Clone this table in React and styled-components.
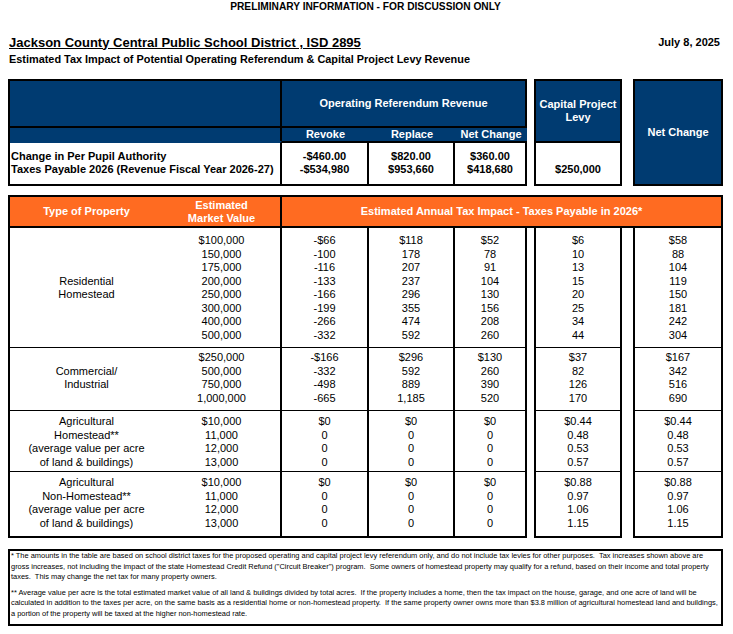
import React from 'react';
import styled, { createGlobalStyle } from 'styled-components';

const NAVY = '#003b71';
const ORANGE = '#ff6b21';

const GlobalStyle = createGlobalStyle`
  html, body {
    margin: 0;
    padding: 0;
    background: #fff;
  }
  body {
    font-family: 'Liberation Sans', Arial, sans-serif;
    color: #000;
  }
`;

const Page = styled.div`
  width: 723px;
  padding-left: 8px;
  box-sizing: border-box;
`;

const Banner = styled.div`
  height: 14px;
  line-height: 14px;
  text-align: center;
  font-size: 10.2px;
  font-weight: bold;
`;

const TitleRow = styled.div`
  display: flex;
  justify-content: space-between;
  align-items: center;
  margin-top: 20px;
  height: 16px;
  padding: 0 3px 0 1px;
`;

const Title = styled.h1`
  margin: 0;
  font-size: 13px;
  font-weight: bold;
  text-decoration: underline;
  text-underline-offset: 1px;
`;

const DateText = styled.span`
  font-size: 11px;
  font-weight: bold;
`;

const Subtitle = styled.h2`
  margin: 2px 0 0 1px;
  height: 14px;
  line-height: 14px;
  font-size: 10.9px;
  font-weight: bold;
`;

/* ---------- top summary boxes ---------- */

const TopRow = styled.div`
  display: flex;
  align-items: flex-start;
  margin-top: 13px;
  height: 107px;
`;

const OperatingBox = styled.div`
  width: 519px;
  height: 107px;
  box-sizing: border-box;
  border: 2px solid #000;
  border-right: none;
  margin-right: 7px;
`;

const HeadRow = styled.div`
  display: grid;
  grid-template-columns: ${({ $cols }) => $cols};
  height: ${({ $h }) => $h}px;
  box-sizing: border-box;
  border-bottom: ${({ $line }) => ($line ? '2px solid #000' : 'none')};
`;

const HeadCell = styled.div`
  display: flex;
  align-items: center;
  justify-content: center;
  text-align: center;
  background: ${NAVY};
  color: #fff;
  font-size: 11px;
  font-weight: bold;
  line-height: 13px;
  box-sizing: border-box;
  border-right: ${({ $divider }) => ($divider ? '2px solid #000' : 'none')};
`;

const SummaryLabel = styled.div`
  padding: 7px 0 0 1px;
  font-size: 11px;
  font-weight: bold;
  line-height: 13px;
  border-top: 2px solid ${NAVY};
  border-right: 2px solid #000;
`;

const SummaryValue = styled.div`
  padding-top: 7px;
  text-align: center;
  font-size: 11px;
  font-weight: bold;
  line-height: 13px;
  box-sizing: border-box;
  border-top: 2px solid #000;
  border-right: 2px solid #000;
`;

const SideBox = styled.div`
  display: flex;
  flex-direction: column;
  width: ${({ $w }) => $w}px;
  height: 107px;
  box-sizing: border-box;
  border: 2px solid #000;
  margin-right: ${({ $mr }) => $mr || 0}px;
  background: ${({ $fill }) => ($fill ? NAVY : '#fff')};
`;

const SideHead = styled(HeadCell)`
  flex: ${({ $grow }) => ($grow ? 1 : 'none')};
  height: ${({ $h }) => ($h ? `${$h}px` : 'auto')};
`;

const SideValue = styled.div`
  padding-top: 20px;
  text-align: center;
  font-size: 11px;
  font-weight: bold;
  line-height: 13px;
  border-top: 2px solid #000;
`;

/* ---------- main table ---------- */

const Table = styled.div`
  margin-top: 9px;
`;

const OrangeHead = styled.div`
  display: grid;
  grid-template-columns: 153px 119px 1fr;
  height: 33px;
  box-sizing: border-box;
  border: 2px solid #000;
  background: ${ORANGE};
`;

const OrangeCell = styled.div`
  display: flex;
  align-items: center;
  justify-content: center;
  text-align: center;
  color: #fff;
  font-size: 11px;
  font-weight: bold;
  line-height: 13.5px;
  padding-top: 1px;
  box-sizing: border-box;
  border-right: ${({ $divider }) => ($divider ? '2px solid #000' : 'none')};
`;

const Body = styled.div`
  display: flex;
  align-items: flex-start;
`;

const Group = styled.div`
  width: ${({ $w }) => $w}px;
  box-sizing: border-box;
  border: 2px solid #000;
  border-top: none;
  margin-right: ${({ $mr }) => $mr || 0}px;
`;

const Section = styled.div`
  display: grid;
  grid-template-columns: ${({ $cols }) => $cols};
  height: ${({ $h }) => $h}px;
  box-sizing: border-box;
  border-top: ${({ $first }) => ($first ? 'none' : '1px solid #000')};

  & > div {
    padding-top: ${({ $pt }) => $pt}px;
    padding-bottom: ${({ $pb }) => $pb}px;
  }
`;

const Cell = styled.div`
  display: flex;
  flex-direction: column;
  justify-content: ${({ $middle }) => ($middle ? 'center' : 'flex-start')};
  text-align: center;
  font-size: 11px;
  line-height: 13.5px;
  box-sizing: border-box;
  border-right: ${({ $divider }) => ($divider ? '2px solid #000' : 'none')};
`;

const Line = styled.span`
  display: block;
  white-space: nowrap;
`;

/* ---------- footnotes ---------- */

const Notes = styled.div`
  margin-top: 11px;
  box-sizing: border-box;
  border: 2px solid #000;
  padding: 0 0 5px 1px;
  font-size: 7.45px;
  line-height: 10.5px;
`;

const Note = styled.p`
  margin: ${({ $gap }) => ($gap ? '5.25px' : '0')} 0 0;
  white-space: pre;
`;

const sections = [
  {
    h: 119, pt: 6, pb: 5,
    type: ['Residential', 'Homestead'],
    market: ['$100,000', '150,000', '175,000', '200,000', '250,000', '300,000', '400,000', '500,000'],
    revoke: ['-$66', '-100', '-116', '-133', '-166', '-199', '-266', '-332'],
    replace: ['$118', '178', '207', '237', '296', '355', '474', '592'],
    net: ['$52', '78', '91', '104', '130', '156', '208', '260'],
    capital: ['$6', '10', '13', '15', '20', '25', '34', '44'],
    total: ['$58', '88', '104', '119', '150', '181', '242', '304'],
  },
  {
    h: 63, pt: 3, pb: 5,
    type: ['Commercial/', 'Industrial'],
    market: ['$250,000', '500,000', '750,000', '1,000,000'],
    revoke: ['-$166', '-332', '-498', '-665'],
    replace: ['$296', '592', '889', '1,185'],
    net: ['$130', '260', '390', '520'],
    capital: ['$37', '82', '126', '170'],
    total: ['$167', '342', '516', '690'],
  },
  {
    h: 61, pt: 4, pb: 2,
    type: ['Agricultural', 'Homestead**', '(average value per acre', 'of land & buildings)'],
    market: ['$10,000', '11,000', '12,000', '13,000'],
    revoke: ['$0', '0', '0', '0'],
    replace: ['$0', '0', '0', '0'],
    net: ['$0', '0', '0', '0'],
    capital: ['$0.44', '0.48', '0.53', '0.57'],
    total: ['$0.44', '0.48', '0.53', '0.57'],
  },
  {
    h: 65, pt: 4, pb: 6,
    type: ['Agricultural', 'Non-Homestead**', '(average value per acre', 'of land & buildings)'],
    market: ['$10,000', '11,000', '12,000', '13,000'],
    revoke: ['$0', '0', '0', '0'],
    replace: ['$0', '0', '0', '0'],
    net: ['$0', '0', '0', '0'],
    capital: ['$0.88', '0.97', '1.06', '1.15'],
    total: ['$0.88', '0.97', '1.06', '1.15'],
  },
];

const Lines = ({ items }) => items.map((t, i) => <Line key={i}>{t}</Line>);

const SectionRow = ({ s, index, cols, children }) => (
  <Section $cols={cols} $h={s.h} $pt={s.pt} $pb={s.pb} $first={index === 0}>
    {children}
  </Section>
);

const App = () => {
  return (
    <Page>
      <GlobalStyle />
      <Banner>PRELIMINARY INFORMATION - FOR DISCUSSION ONLY</Banner>

      <TitleRow>
        <Title>Jackson County Central Public School District , ISD 2895</Title>
        <DateText>July 8, 2025</DateText>
      </TitleRow>
      <Subtitle>Estimated Tax Impact of Potential Operating Referendum &amp; Capital Project Levy Revenue</Subtitle>

      <TopRow>
        <OperatingBox>
          <HeadRow $cols="272px 245px" $h={47} $line>
            <HeadCell $divider />
            <HeadCell $divider>Operating Referendum Revenue</HeadCell>
          </HeadRow>
          <HeadRow $cols="272px 87px 86px 72px" $h={13}>
            <HeadCell $divider />
            <HeadCell>Revoke</HeadCell>
            <HeadCell>Replace</HeadCell>
            <HeadCell>Net Change</HeadCell>
          </HeadRow>
          <HeadRow $cols="272px 87px 86px 72px" $h={43}>
            <SummaryLabel>
              <Line>Change in Per Pupil Authority</Line>
              <Line>Taxes Payable 2026 (Revenue Fiscal Year 2026-27)</Line>
            </SummaryLabel>
            <SummaryValue>
              <Line>-$460.00</Line>
              <Line>-$534,980</Line>
            </SummaryValue>
            <SummaryValue>
              <Line>$820.00</Line>
              <Line>$953,660</Line>
            </SummaryValue>
            <SummaryValue>
              <Line>$360.00</Line>
              <Line>$418,680</Line>
            </SummaryValue>
          </HeadRow>
        </OperatingBox>

        <SideBox $w={88} $mr={11}>
          <SideHead $h={60}>Capital Project<br />Levy</SideHead>
          <SideValue>$250,000</SideValue>
        </SideBox>

        <SideBox $w={90} $fill>
          <SideHead $grow>Net Change</SideHead>
        </SideBox>
      </TopRow>

      <Table>
        <OrangeHead>
          <OrangeCell>Type of Property</OrangeCell>
          <OrangeCell $divider>Estimated<br />Market Value</OrangeCell>
          <OrangeCell>Estimated Annual Tax Impact - Taxes Payable in 2026*</OrangeCell>
        </OrangeHead>

        <Body>
          <Group $w={519} $mr={7}>
            {sections.map((s, i) => (
              <SectionRow key={i} s={s} index={i} cols="153px 119px 87px 86px 70px">
                <Cell $middle><Lines items={s.type} /></Cell>
                <Cell $divider><Lines items={s.market} /></Cell>
                <Cell $divider><Lines items={s.revoke} /></Cell>
                <Cell $divider><Lines items={s.replace} /></Cell>
                <Cell><Lines items={s.net} /></Cell>
              </SectionRow>
            ))}
          </Group>
          <Group $w={88} $mr={11}>
            {sections.map((s, i) => (
              <SectionRow key={i} s={s} index={i} cols="1fr">
                <Cell><Lines items={s.capital} /></Cell>
              </SectionRow>
            ))}
          </Group>
          <Group $w={90}>
            {sections.map((s, i) => (
              <SectionRow key={i} s={s} index={i} cols="1fr">
                <Cell><Lines items={s.total} /></Cell>
              </SectionRow>
            ))}
          </Group>
        </Body>
      </Table>

      <Notes>
        <Note>{'* The amounts in the table are based on school district taxes for the proposed operating and capital project levy referendum only, and do not include tax levies for other purposes.  Tax increases shown above are\ngross increases, not including the impact of the state Homestead Credit Refund ("Circuit Breaker") program.  Some owners of homestead property may qualify for a refund, based on their income and total property\ntaxes.  This may change the net tax for many property owners.'}</Note>
        <Note $gap>{'** Average value per acre is the total estimated market value of all land & buildings divided by total acres.  If the property includes a home, then the tax impact on the house, garage, and one acre of land will be\ncalculated in addition to the taxes per acre, on the same basis as a residential home or non-homestead property.  If the same property owner owns more than $3.8 million of agricultural homestead land and buildings,\na portion of the property will be taxed at the higher non-homestead rate.'}</Note>
      </Notes>
    </Page>
  );
};

export default App;
